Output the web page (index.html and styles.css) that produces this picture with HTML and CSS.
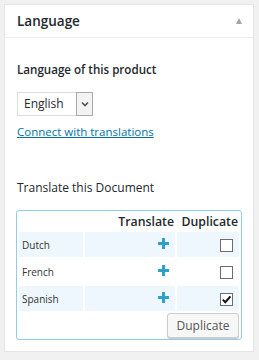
FILE: index.html
```html
<!DOCTYPE html>
<html lang="en">
<head>
 <meta charset="UTF-8">
 <title>Language</title>
 <link rel="stylesheet" href="styles.css">
</head>
<body>
<div class="postbox">
 <div class="postbox_head">
  <h2>Language</h2>
  <span class="toggle"></span>
 </div>
 <div class="inside">
  <p class="label">Language of this product</p>
  <div class="select">
   <span class="select_value">English</span>
   <span class="select_arrow">
    <svg width="8" height="6" viewBox="0 0 8 6"><path d="M1 1.5 L4 4.5 L7 1.5" fill="none" stroke="#555" stroke-width="1.6"/></svg>
   </span>
  </div>
  <a class="connect" href="#">Connect with translations</a>
  <p class="doc_title">Translate this Document</p>
  <div class="translations">
   <table>
    <colgroup>
     <col class="col_lang">
     <col>
     <col class="col_dup">
    </colgroup>
    <tr class="head">
     <th></th>
     <th>Translate</th>
     <th>Duplicate</th>
    </tr>
    <tr class="odd">
     <td class="lang">Dutch</td>
     <td class="plus"><span class="icon_plus"></span></td>
     <td class="dup"><span class="check"></span></td>
    </tr>
    <tr>
     <td class="lang">French</td>
     <td class="plus"><span class="icon_plus"></span></td>
     <td class="dup"><span class="check"></span></td>
    </tr>
    <tr class="odd">
     <td class="lang">Spanish</td>
     <td class="plus"><span class="icon_plus"></span></td>
     <td class="dup"><span class="check"><svg width="11" height="11" viewBox="0 0 11 11"><path d="M1.8 5.6 L4.3 8.2 L9.4 2.4" fill="none" stroke="#111" stroke-width="2"/></svg></span></td>
    </tr>
   </table>
   <div class="actions">
    <button type="button">Duplicate</button>
   </div>
  </div>
 </div>
</div>
</body>
</html>
```

FILE: styles.css
```css
body{
  margin: 0;
  background: #f1f1f1;
  font-family: "Open Sans", sans-serif;
  color: #23282d;
}
.postbox{
  margin: 4px 5px 0 4px;
  background: #fff;
  border: 1px solid #e5e5e5;
  box-shadow: 0 1px 1px rgba(0,0,0,0.04);
}
.postbox_head{
  display: flex;
  align-items: center;
  justify-content: space-between;
  height: 32px;
  padding: 0 11px 0 12px;
  border-bottom: 1px solid #eee;
}
.postbox_head h2{
  margin: 0;
  font-size: 13.5px;
  font-weight: 600;
}
.toggle{
  width: 0;
  height: 0;
  border-left: 3.5px solid transparent;
  border-right: 3.5px solid transparent;
  border-bottom: 6px solid #a0a5aa;
  margin-top: -1px;
}
.inside{
  padding: 0 11px 11px 11px;
}
.label{
  margin: 23px 0 0 1px;
  line-height: 18px;
  font-size: 11.6px;
  font-weight: 600;
}
.select{
  display: flex;
  width: 74px;
  height: 22px;
  margin: 13px 0 0 1px;
  border: 1px solid #ddd;
  font-size: 12px;
}
.select_value{
  flex: 1;
  line-height: 22px;
  padding-left: 6px;
}
.select_arrow{
  display: flex;
  align-items: center;
  justify-content: center;
  width: 15px;
  background: #f3f3f3;
  border: 1px solid #a9a9a9;
  margin: -1px -1px -1px 0;
}
.connect{
  display: block;
  margin: 7px 0 0 1px;
  line-height: 18px;
  font-size: 11.5px;
  color: #0073aa;
}
.doc_title{
  margin: 38px 0 0 1px;
  line-height: 18px;
  font-size: 12px;
}
.translations{
  margin-top: 13px;
  border: 1px solid #8fcdee;
  border-radius: 3px;
}
table{
  width: 100%;
  table-layout: fixed;
  border-spacing: 2px;
  font-size: 10px;
}
.col_lang{
  width: 64px;
}
.col_dup{
  width: 62px;
}
th{
  text-align: right;
  font-size: 12.3px;
  font-weight: 600;
  line-height: 17px;
  height: 17px;
  padding: 0 1px 0 0;
  white-space: nowrap;
}
td{
  height: 25px;
  padding: 0;
}
tr.odd td{
  background: #eef7fd;
}
.lang{
  padding-left: 3px;
  color: #333;
}
.plus{
  text-align: right;
  padding-right: 6px;
}
.dup{
  text-align: right;
  padding-right: 6px;
}
.icon_plus{
  display: inline-block;
  position: relative;
  width: 11px;
  height: 11px;
  margin-top: -5px;
  vertical-align: middle;
}
.icon_plus::before,
.icon_plus::after{
  content: "";
  position: absolute;
  background: #2ea2cc;
}
.icon_plus::before{
  left: 4px;
  top: 0;
  width: 3px;
  height: 11px;
}
.icon_plus::after{
  left: 0;
  top: 4px;
  width: 11px;
  height: 3px;
}
.check{
  display: inline-flex;
  align-items: center;
  justify-content: center;
  width: 11px;
  height: 11px;
  border: 1px solid #6d6d6d;
  background: #fff;
  vertical-align: middle;
}
.actions{
  text-align: right;
  padding: 0 2px 1px 0;
}
button{
  width: 72px;
  height: 25px;
  font-family: inherit;
  font-size: 12px;
  color: #555;
  background: #f7f7f7;
  border: 1px solid #ccc;
  border-radius: 3px;
  box-shadow: 0 1px 0 #ccc;
  padding: 0;
}
```
